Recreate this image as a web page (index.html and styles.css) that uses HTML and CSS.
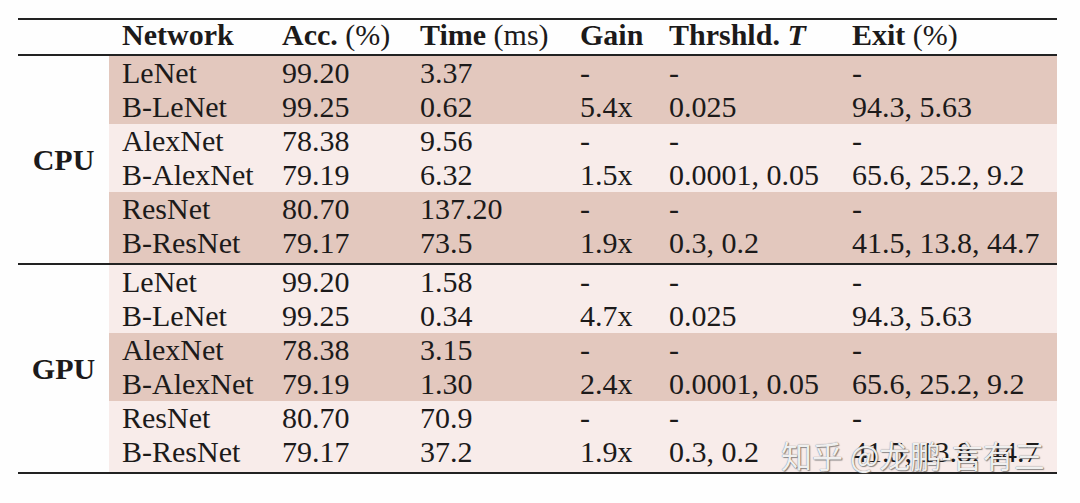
FILE: index.html
```html
<!DOCTYPE html>
<html lang="en">
<head>
<meta charset="utf-8">
<title>Table</title>
<link rel="stylesheet" href="styles.css">
</head>
<body>
<div class="page">
  <table class="results">
    <colgroup>
      <col class="c0"><col class="c1"><col class="c2"><col class="c3"><col class="c4"><col class="c5"><col class="c6">
    </colgroup>
    <thead>
      <tr>
        <th></th>
        <th><b>Network</b></th>
        <th><b>Acc.</b> <span class="reg">(%)</span></th>
        <th><b>Time</b> <span class="reg">(ms)</span></th>
        <th><b>Gain</b></th>
        <th><b>Thrshld.</b> <b class="math">T</b></th>
        <th><b>Exit</b> <span class="reg">(%)</span></th>
      </tr>
    </thead>
    <tbody class="grp">
      <tr class="dark"><td class="dev" rowspan="6">CPU</td><td>LeNet</td><td>99.20</td><td>3.37</td><td>-</td><td>-</td><td>-</td></tr>
      <tr class="dark"><td>B-LeNet</td><td>99.25</td><td>0.62</td><td>5.4x</td><td>0.025</td><td>94.3, 5.63</td></tr>
      <tr class="light"><td>AlexNet</td><td>78.38</td><td>9.56</td><td>-</td><td>-</td><td>-</td></tr>
      <tr class="light"><td>B-AlexNet</td><td>79.19</td><td>6.32</td><td>1.5x</td><td>0.0001, 0.05</td><td>65.6, 25.2, 9.2</td></tr>
      <tr class="dark"><td>ResNet</td><td>80.70</td><td>137.20</td><td>-</td><td>-</td><td>-</td></tr>
      <tr class="dark last"><td>B-ResNet</td><td>79.17</td><td>73.5</td><td>1.9x</td><td>0.3, 0.2</td><td>41.5, 13.8, 44.7</td></tr>
    </tbody>
    <tbody class="grp">
      <tr class="light"><td class="dev" rowspan="6">GPU</td><td>LeNet</td><td>99.20</td><td>1.58</td><td>-</td><td>-</td><td>-</td></tr>
      <tr class="light"><td>B-LeNet</td><td>99.25</td><td>0.34</td><td>4.7x</td><td>0.025</td><td>94.3, 5.63</td></tr>
      <tr class="dark"><td>AlexNet</td><td>78.38</td><td>3.15</td><td>-</td><td>-</td><td>-</td></tr>
      <tr class="dark"><td>B-AlexNet</td><td>79.19</td><td>1.30</td><td>2.4x</td><td>0.0001, 0.05</td><td>65.6, 25.2, 9.2</td></tr>
      <tr class="light"><td>ResNet</td><td>80.70</td><td>70.9</td><td>-</td><td>-</td><td>-</td></tr>
      <tr class="light last"><td>B-ResNet</td><td>79.17</td><td>37.2</td><td>1.9x</td><td>0.3, 0.2</td><td>41.5, 13.8, 44.7</td></tr>
    </tbody>
  </table>
  <div class="watermark">知乎 @龙鹏-言有三</div>
</div>
</body>
</html>
```
FILE: styles.css
```css
html, body {
  margin: 0;
  padding: 0;
  background: #fefefe;
}
.page {
  position: relative;
  padding: 18px 0 0 18px;
  font-family: "Liberation Serif", "Times New Roman", serif;
  font-size: 30px;
  color: #1c1a1a;
}
.results {
  border-collapse: collapse;
  table-layout: fixed;
  width: 1039px;
  border-top: 2px solid #222;
  border-bottom: 2px solid #222;
}
.c0 { width: 91px; }
.c1 { width: 160px; }
.c2 { width: 138px; }
.c3 { width: 160px; }
.c4 { width: 89px; }
.c5 { width: 183px; }
.c6 { width: 218px; }
.results th {
  height: 30px;
  padding: 0 0 4px 13px;
  text-align: left;
  font-weight: normal;
  line-height: 30px;
  white-space: nowrap;
  border-bottom: 2px solid #222;
}
.results th b { font-weight: bold; }
.results .math { font-style: italic; }
.results td {
  height: 34px;
  padding: 0 0 0 13px;
  line-height: 34px;
  white-space: nowrap;
}
.results tr.last td { padding-bottom: 3px; }
.grp + .grp tr:first-child td { border-top: 2px solid #222; }
.dark td { background: #e3c8be; }
.light td { background: #f8ecea; }
.results td.dev {
  background: #fefefe;
  padding: 0;
  text-align: center;
  font-weight: bold;
  vertical-align: middle;
}
.watermark {
  position: absolute;
  left: 781px;
  top: 435px;
  font-family: "Noto Sans CJK SC", "Liberation Sans", sans-serif;
  font-size: 31px;
  line-height: 40px;
  color: rgba(255, 255, 255, 0.92);
  text-shadow: 0 0 1px rgba(60, 60, 60, 0.8), 1px 1px 1px rgba(80, 80, 80, 0.6);
  white-space: nowrap;
}
```
